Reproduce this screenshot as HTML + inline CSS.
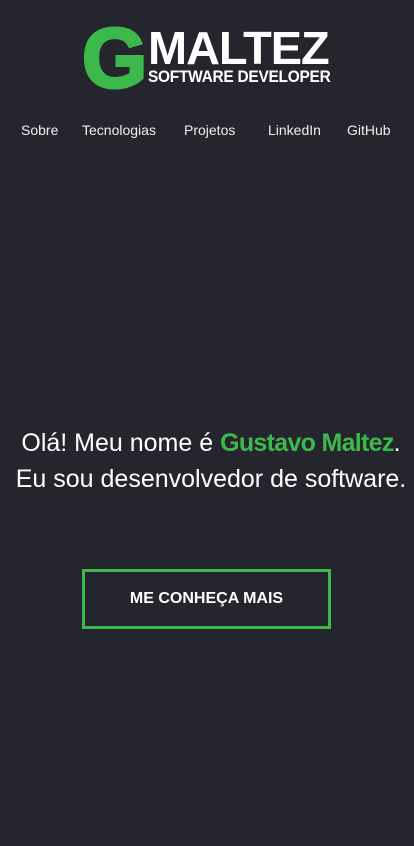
<!DOCTYPE html>
<html><head><meta charset="utf-8"><style>
html,body{margin:0;padding:0;}
body{width:414px;height:846px;background:#25262d;color:#fff;font-family:"Liberation Sans",sans-serif;position:relative;overflow:hidden;}
.a{position:absolute;white-space:nowrap;}
.nav{top:122px;font-size:14px;color:#eee;}
.g{color:#3cb94a;}
</style></head><body>
<div class="a g" style="left:82px;top:16px;font-size:84px;font-weight:bold;line-height:84px;-webkit-text-stroke:3px #3cb94a;">G</div>
<div class="a" style="left:148px;top:25px;font-size:46px;font-weight:bold;line-height:46px;transform:scaleX(1.02);transform-origin:left;letter-spacing:-1px;">MALTEZ</div>
<div class="a" style="left:148px;top:68px;font-size:17px;font-weight:bold;line-height:18px;transform:scaleX(0.91);transform-origin:left;letter-spacing:-0.3px;">SOFTWARE DEVELOPER</div>
<div class="a nav" style="left:21px;">Sobre</div>
<div class="a nav" style="left:82px;">Tecnologias</div>
<div class="a nav" style="left:184px;">Projetos</div>
<div class="a nav" style="left:268px;">LinkedIn</div>
<div class="a nav" style="left:347px;">GitHub</div>
<div class="a" style="left:4px;width:414px;text-align:center;top:425px;font-size:25px;line-height:36px;">Olá! Meu nome é <span class="g" style="font-weight:bold;letter-spacing:-0.7px">Gustavo Maltez</span>.<br>Eu sou desenvolvedor de software.</div>
<div class="a" style="left:82px;top:569px;width:243px;height:54px;border:3px solid #3cb94a;text-align:center;line-height:54px;font-size:16px;font-weight:bold;">ME CONHEÇA MAIS</div>
</body></html>
